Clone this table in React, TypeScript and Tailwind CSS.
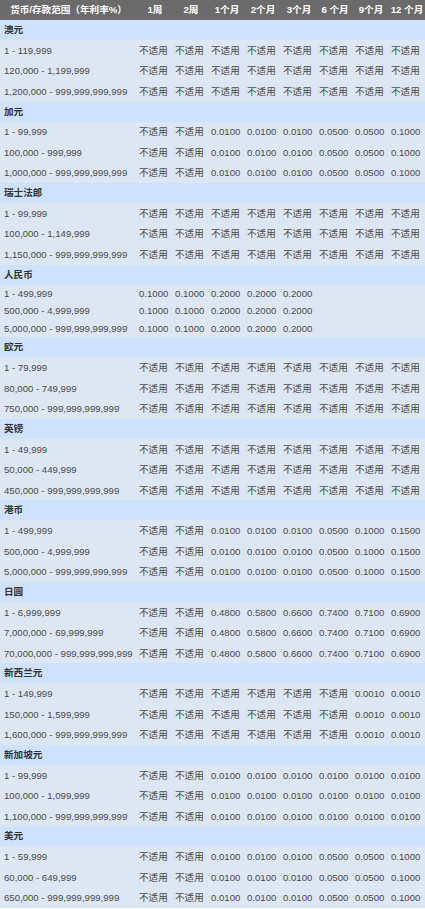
const NA = "不适用";

type Group = { name: string; rows: { range: string; rates: string[] }[]; compact?: boolean };

const all = (v: string) => Array(8).fill(v);
const same = (ranges: string[], rates: string[]) => ranges.map((range) => ({ range, rates }));

const groups: Group[] = [
    { name: "澳元", rows: same(["1 - 119,999", "120,000 - 1,199,999", "1,200,000 - 999,999,999,999"], all(NA)) },
    {
        name: "加元",
        rows: same(
            ["1 - 99,999", "100,000 - 999,999", "1,000,000 - 999,999,999,999"],
            [NA, NA, "0.0100", "0.0100", "0.0100", "0.0500", "0.0500", "0.1000"]
        ),
    },
    { name: "瑞士法郎", rows: same(["1 - 99,999", "100,000 - 1,149,999", "1,150,000 - 999,999,999,999"], all(NA)) },
    {
        name: "人民币",
        compact: true,
        rows: same(
            ["1 - 499,999", "500,000 - 4,999,999", "5,000,000 - 999,999,999,999"],
            ["0.1000", "0.1000", "0.2000", "0.2000", "0.2000", "", "", ""]
        ),
    },
    { name: "欧元", rows: same(["1 - 79,999", "80,000 - 749,999", "750,000 - 999,999,999,999"], all(NA)) },
    { name: "英镑", rows: same(["1 - 49,999", "50,000 - 449,999", "450,000 - 999,999,999,999"], all(NA)) },
    {
        name: "港币",
        rows: same(
            ["1 - 499,999", "500,000 - 4,999,999", "5,000,000 - 999,999,999,999"],
            [NA, NA, "0.0100", "0.0100", "0.0100", "0.0500", "0.1000", "0.1500"]
        ),
    },
    {
        name: "日圆",
        rows: same(
            ["1 - 6,999,999", "7,000,000 - 69,999,999", "70,000,000 - 999,999,999,999"],
            [NA, NA, "0.4800", "0.5800", "0.6600", "0.7400", "0.7100", "0.6900"]
        ),
    },
    {
        name: "新西兰元",
        rows: same(
            ["1 - 149,999", "150,000 - 1,599,999", "1,600,000 - 999,999,999,999"],
            [NA, NA, NA, NA, NA, NA, "0.0010", "0.0010"]
        ),
    },
    {
        name: "新加坡元",
        rows: same(
            ["1 - 99,999", "100,000 - 1,099,999", "1,100,000 - 999,999,999,999"],
            [NA, NA, "0.0100", "0.0100", "0.0100", "0.0100", "0.0100", "0.0100"]
        ),
    },
    {
        name: "美元",
        rows: same(
            ["1 - 59,999", "60,000 - 649,999", "650,000 - 999,999,999,999"],
            [NA, NA, "0.0100", "0.0100", "0.0100", "0.0500", "0.0500", "0.1000"]
        ),
    },
];

const periods = ["1周", "2周", "1个月", "2个月", "3个月", "6 个月", "9个月", "12 个月"];

export default function App() {
    return (
        <div
            className="w-[425px] text-[9.6px] leading-none text-[#4a4a4a]"
            style={{ fontFamily: '"Liberation Sans", Arial, "Noto Sans CJK SC", sans-serif' }}
        >
            <div className="grid grid-cols-[137px_repeat(8,36px)] h-[20px] items-center bg-[#6b6b6b] font-bold text-white">
                <div className="text-center">货币/存款范围（年利率%）</div>
                {periods.map((p) => (
                    <div key={p} className="text-center">
                        {p}
                    </div>
                ))}
            </div>

            {groups.map((g) => (
                <div key={g.name}>
                    <div className="h-[20px] flex items-center pl-1 bg-[#cfe2fd] font-bold text-[#333]">
                        {g.name}
                    </div>
                    <div className="bg-[#dde6f3]">
                        {g.rows.map((r) => (
                            <div
                                key={r.range}
                                className={
                                    g.compact
                                        ? "grid grid-cols-[137px_repeat(8,36px)] h-[17.6px] items-center"
                                        : "grid grid-cols-[137px_repeat(8,36px)] h-[20.5px] items-center pt-[1px]"
                                }
                            >
                                <div className="pl-1 whitespace-nowrap">{r.range}</div>
                                {r.rates.map((v, i) => (
                                    <div key={i} className="pl-[2px] whitespace-nowrap">
                                        {v}
                                    </div>
                                ))}
                            </div>
                        ))}
                    </div>
                </div>
            ))}
        </div>
    );
}
